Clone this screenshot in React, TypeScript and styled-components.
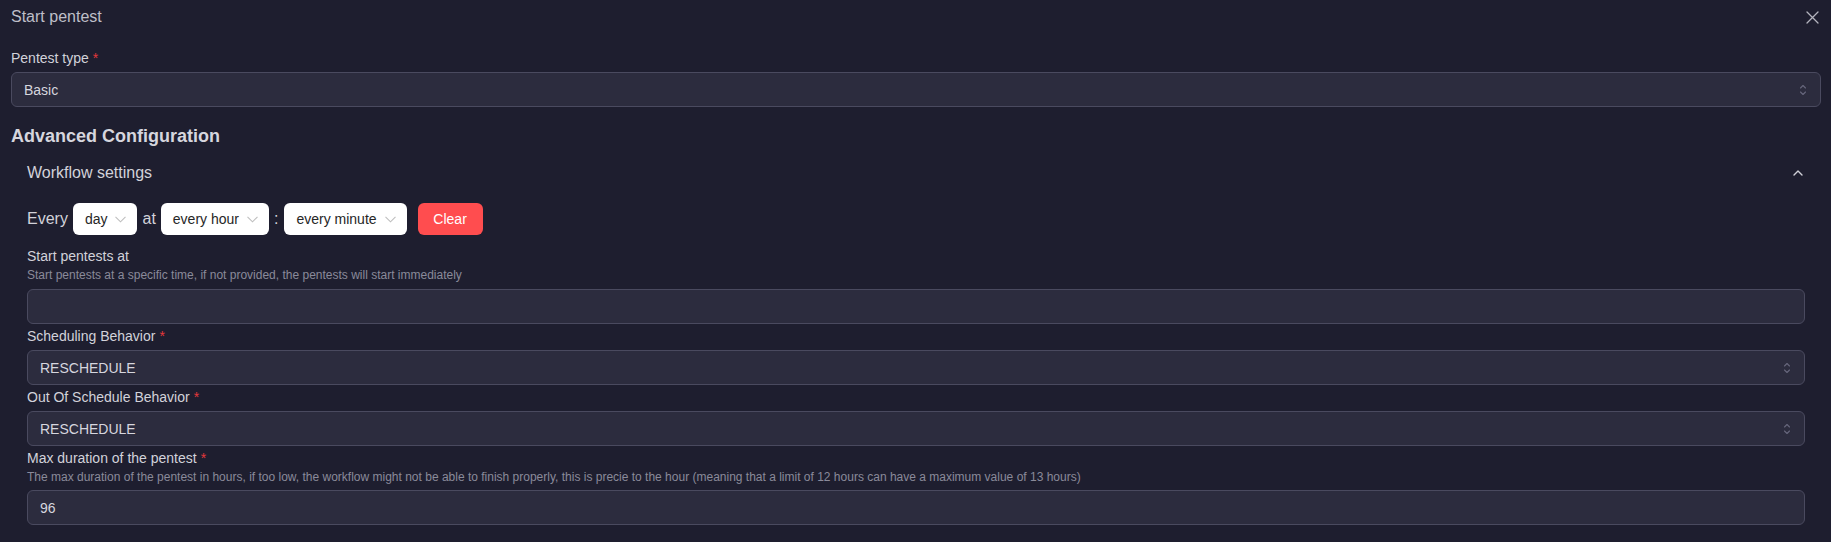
import React from "react";
import styled, { createGlobalStyle } from "styled-components";

const Global = createGlobalStyle`
  html, body { margin: 0; padding: 0; background: #1e1e2f; }
  body { font-family: "Liberation Sans", Arial, sans-serif; color: #d2d2da; }
  * { box-sizing: border-box; }
`;

const Page = styled.div`
  width: 1831px;
  height: 542px;
  background: #1e1e2f;
  overflow: hidden;
`;

const Header = styled.div`
  height: 34px;
  display: flex;
  align-items: center;
  justify-content: space-between;
  padding: 0 12px 0 11px;
`;

const Title = styled.div`
  font-size: 16px;
  color: #bfbfc8;
`;

const CloseBtn = styled.div`
  width: 14px;
  height: 14px;
  display: flex;
  align-items: center;
  justify-content: center;
`;

const Form = styled.div`
  padding: 0 10px 0 11px;
  display: flex;
  flex-direction: column;
`;

const Field = styled.div<{ $mt?: number }>`
  display: flex;
  flex-direction: column;
  margin-top: ${(p) => p.$mt ?? 2}px;
`;

const Label = styled.div`
  font-size: 14px;
  line-height: 20px;
  color: #d2d2da;
`;

const Req = styled.span`
  color: #e5383b;
  margin-left: 4px;
`;

const Desc = styled.div`
  font-size: 12px;
  line-height: 18px;
  color: #8a8a9a;
`;

const Box = styled.div<{ $gap?: number }>`
  margin-top: ${(p) => p.$gap ?? 4}px;
  height: 35px;
  border: 1px solid #4a4a5f;
  border-radius: 6px;
  background: #2c2c3e;
  display: flex;
  align-items: center;
  justify-content: space-between;
  padding: 0 13px 0 12px;
  font-size: 14px;
  color: #d6d6de;
`;

const Heading = styled.div`
  margin-top: 18px;
  font-size: 18px;
  line-height: 22px;
  font-weight: bold;
  color: #d6d6de;
`;

const Section = styled.div`
  padding: 0 16px;
  display: flex;
  flex-direction: column;
`;

const AccHeader = styled.div`
  height: 50px;
  padding-top: 1px;
  display: flex;
  align-items: center;
  justify-content: space-between;
  font-size: 16px;
  color: #d2d2da;
  padding-right: 2px;
`;

const CronRow = styled.div`
  margin-top: 6px;
  height: 32px;
  display: flex;
  align-items: center;
  font-size: 16px;
  color: #d2d2da;
`;

const CronText = styled.span<{ $ml?: number; $mr?: number }>`
  margin-left: ${(p) => p.$ml ?? 0}px;
  margin-right: ${(p) => p.$mr ?? 0}px;
`;

const CronSelect = styled.div`
  height: 32px;
  background: #ffffff;
  border-radius: 6px;
  display: flex;
  align-items: center;
  padding: 0 11px 0 12px;
  gap: 8px;
  font-size: 14px;
  color: #262626;
`;

const ClearBtn = styled.div`
  margin-left: 11px;
  height: 32px;
  width: 65px;
  background: #ff4d4f;
  border-radius: 6px;
  display: flex;
  align-items: center;
  justify-content: center;
  font-size: 14px;
  color: #ffffff;
`;

const UpDown = () => (
  <svg width="8" height="12" viewBox="0 0 8 12" fill="none" stroke="#66667c" strokeWidth="1.1" strokeLinecap="round" strokeLinejoin="round">
    <path d="M1.5 4 L4 1.5 L6.5 4" />
    <path d="M1.5 8 L4 10.5 L6.5 8" />
  </svg>
);

const ChevronDown = () => (
  <svg width="11" height="7" viewBox="0 0 11 7" fill="none" stroke="#bfbfbf" strokeWidth="1.1">
    <path d="M0.5 0.8 L5.5 5.8 L10.5 0.8" />
  </svg>
);

const ChevronUp = () => (
  <svg width="10" height="6" viewBox="0 0 10 6" fill="none" stroke="#d0d0d8" strokeWidth="1.4" strokeLinecap="round" strokeLinejoin="round">
    <path d="M1 5 L5 1 L9 5" />
  </svg>
);

const CloseIcon = () => (
  <svg width="13" height="13" viewBox="0 0 13 13" fill="none" stroke="#b4b4be" strokeWidth="1.3" strokeLinecap="round">
    <path d="M1 1 L12 12 M12 1 L1 12" />
  </svg>
);

export default function App() {
  return (
    <Page>
      <Global />
      <Header>
        <Title>Start pentest</Title>
        <CloseBtn>
          <CloseIcon />
        </CloseBtn>
      </Header>
      <Form>
        <Field $mt={14}>
          <Label>
            Pentest type<Req>*</Req>
          </Label>
          <Box>
            <span>Basic</span>
            <UpDown />
          </Box>
        </Field>
        <Heading>Advanced Configuration</Heading>
        <Section>
          <AccHeader>
            <span>Workflow settings</span>
            <ChevronUp />
          </AccHeader>
          <CronRow>
            <CronText $mr={5}>Every</CronText>
            <CronSelect>
              <span>day</span>
              <ChevronDown />
            </CronSelect>
            <CronText $ml={5} $mr={5}>at</CronText>
            <CronSelect>
              <span>every hour</span>
              <ChevronDown />
            </CronSelect>
            <CronText $ml={5} $mr={6}>:</CronText>
            <CronSelect>
              <span>every minute</span>
              <ChevronDown />
            </CronSelect>
            <ClearBtn>Clear</ClearBtn>
          </CronRow>
          <Field $mt={11}>
            <Label>Start pentests at</Label>
            <Desc>Start pentests at a specific time, if not provided, the pentests will start immediately</Desc>
            <Box $gap={5} />
          </Field>
          <Field>
            <Label>
              Scheduling Behavior<Req>*</Req>
            </Label>
            <Box>
              <span>RESCHEDULE</span>
              <UpDown />
            </Box>
          </Field>
          <Field>
            <Label>
              Out Of Schedule Behavior<Req>*</Req>
            </Label>
            <Box>
              <span>RESCHEDULE</span>
              <UpDown />
            </Box>
          </Field>
          <Field>
            <Label>
              Max duration of the pentest<Req>*</Req>
            </Label>
            <Desc>
              The max duration of the pentest in hours, if too low, the workflow might not be able to finish properly, this is precie to the hour (meaning that a limit of 12 hours can have a maximum value of 13 hours)
            </Desc>
            <Box>
              <span>96</span>
            </Box>
          </Field>
        </Section>
      </Form>
    </Page>
  );
}
